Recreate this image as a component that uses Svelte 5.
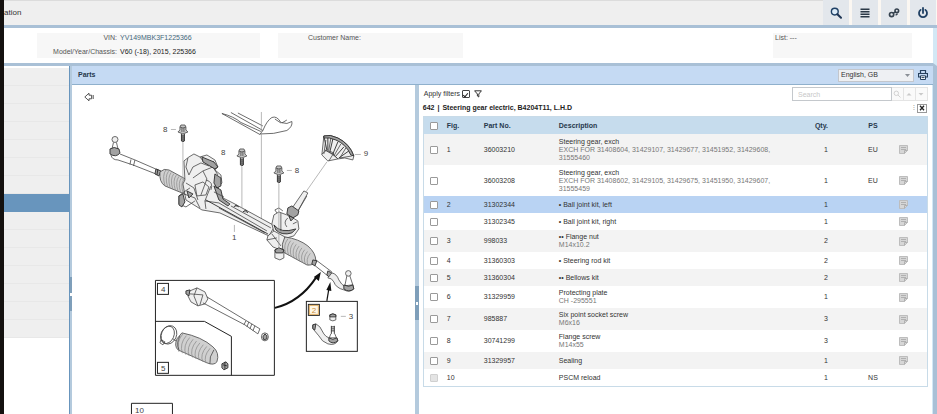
<script lang="ts">
  type Part = {
    fig: string;
    partNo: string;
    name: string;
    detail?: string;
    qty: number;
    ps?: string;
    disabled?: boolean;
    note?: boolean;
  };

  const parts: Part[] = [
    {
      fig: '1',
      partNo: '36003210',
      name: 'Steering gear, exch',
      detail: 'EXCH FOR 31408604, 31429107, 31429677, 31451952, 31429608, 31555460',
      qty: 1,
      ps: 'EU',
    },
    {
      fig: '',
      partNo: '36003208',
      name: 'Steering gear, exch',
      detail: 'EXCH FOR 31408602, 31429105, 31429675, 31451950, 31429607, 31555459',
      qty: 1,
      ps: 'EU',
    },
    { fig: '2', partNo: '31302344', name: '• Ball joint kit, left', qty: 1 },
    { fig: '', partNo: '31302345', name: '• Ball joint kit, right', qty: 1 },
    { fig: '3', partNo: '998033', name: '•• Flange nut', detail: 'M14x10.2', qty: 2 },
    { fig: '4', partNo: '31360303', name: '• Steering rod kit', qty: 2 },
    { fig: '5', partNo: '31360304', name: '•• Bellows kit', qty: 2 },
    { fig: '6', partNo: '31329959', name: 'Protecting plate', detail: 'CH -295551', qty: 1 },
    { fig: '7', partNo: '985887', name: 'Six point socket screw', detail: 'M6x16', qty: 3 },
    { fig: '8', partNo: '30741299', name: 'Flange screw', detail: 'M14x55', qty: 3 },
    { fig: '9', partNo: '31329957', name: 'Sealing', qty: 1 },
    { fig: '10', partNo: '', name: 'PSCM reload', qty: 1, ps: 'NS', disabled: true, note: false },
  ];

  const sections = Array.from({ length: 15 }, (_, i) => i);

  // ribs across the three rubber bellows
  const ribs = [0, 1, 2, 3, 4, 5, 6, 7, 8];
  const bolts = [
    { x: 183, y: 129, end: 180 },
    { x: 242, y: 153, end: 208 },
    { x: 279, y: 170, end: 251 },
  ];

  let selectedPart = $state('31302344');
  let activeSection = $state(7);
  let filtersOn = $state(true);
  let query = $state('');
  let language = $state('English, GB');
</script>

<div class="app">
  <header class="topbar">
    <span class="topbar__title">ation</span>
    <nav class="topbar__actions" aria-label="Main">
      <button type="button" aria-label="Search">
        <svg viewBox="0 0 12 12" width="12" height="12">
          <circle cx="4.8" cy="4.6" r="3.4" fill="#dcebf8" stroke="#1f4166" stroke-width="1.4" />
          <path d="M7.4 7.2 11 10.8" stroke="#1f3554" stroke-width="2" stroke-linecap="round" />
        </svg>
      </button>
      <button type="button" aria-label="List">
        <svg viewBox="0 0 12 12" width="12" height="12">
          <path d="M1.500 2.200h9M1.500 4.700h9M1.500 7.200h9M1.500 9.700h9" stroke="#2b3947" stroke-width="1.600" />
        </svg>
      </button>
      <button type="button" aria-label="Links">
        <svg viewBox="0 0 12 12" width="12" height="12" fill="none" stroke="#35424f">
          <circle cx="3.6" cy="7.6" r="2.1" stroke-width="1.7" />
          <circle cx="8.8" cy="3.8" r="1.8" stroke-width="1.6" />
          <path d="M5 6.400 7.400 4.800M7.600 8.200l2-1.400" stroke-width="1.400" />
        </svg>
      </button>
      <button type="button" aria-label="Log out">
        <svg viewBox="0 0 12 12" width="12" height="12" fill="none" stroke="#1f3f63" stroke-width="1.8">
          <path d="M3.600 2.900a4 4 0 1 0 4.800 0M6 1v5" stroke-linecap="round" />
        </svg>
      </button>
    </nav>
  </header>

  <section class="vehicle">
    <dl class="vehicle__box vehicle__box--car">
      <dt>VIN:</dt>
      <dd class="vin">YV149MBK3F1225366</dd>
      <dt>Model/Year/Chassis:</dt>
      <dd>V60 (-18), 2015, 225366</dd>
    </dl>
    <div class="vehicle__box vehicle__box--customer">Customer Name:</div>
    <div class="vehicle__box vehicle__box--list">List: ---</div>
  </section>

  <div class="workspace">
    <nav class="sections" aria-label="Sections">
      {#each sections as i (i)}
        <button
          type="button"
          class:is-active={activeSection === i}
          aria-label={`Section ${i + 1}`}
          onclick={() => (activeSection = i)}
        ></button>
      {/each}
    </nav>
    <div class="splitter splitter--left"><span></span></div>

    <main class="parts">
      <div class="parts__header">
        <h1>Parts</h1>
        <div class="language">
          <select aria-label="Language" bind:value={language}>
            <option>English, GB</option>
          </select>
          <svg viewBox="0 0 5 3" width="5" height="3"><path d="M0 0h5L2.500 3z" fill="#8a8f96" /></svg>
        </div>
        <button type="button" class="print" aria-label="Print">
          <svg viewBox="0 0 10 10" width="10" height="10" fill="none" stroke="#26405c">
            <path d="M2.500 3.500v-3h5v3M2.500 7h-2V3.500h9V7h-2" stroke-width="1.200" />
            <path d="M2.500 5.800h5v3.700h-5z" fill="#fff" />
            <path d="M3.500 7.600h3" />
          </svg>
        </button>
      </div>

      <div class="parts__body">
        <section class="drawing">
          <div class="drawing__bar">
            <button type="button" aria-label="Back">
              <svg viewBox="0 0 10 10" width="10" height="10">
                <path d="M.8 5 5 1.200v2h2.600v3.600H5v2zM9.200 3v4" fill="#fff" stroke="#444" stroke-width=".9" />
              </svg>
            </button>
          </div>

          <svg class="drawing__art" viewBox="72 106 343 308" role="img" aria-label="Steering gear">
            <!-- protecting plate -->
            <g class="line">
              <path d="M222 113.500 260 134.500 263 130.500 231 112.500M238 113l25 13" />
              <path d="M222 113.500q12 3 19 9l20 9M263 130.500q4-10 9-13 5-2 9 5l6 1 5-2q1 5-5 9-13 4-27 3.500" />
              <path d="M275 119l6 4M282 123l5-3" />
            </g>
            <path class="leader" d="M261.500 112v107M327 162l-21 30" />

            <!-- left tie rod -->
            <g class="line">
              <circle cx="115" cy="139.500" r="3" />
              <path d="M113.500 142.500 112 149M116.500 142.500 118 149" />
              <path class="dark" d="M110 149q4-3 9 0l1 4q-4 5-10 1z" />
              <path d="M111 155q1 5 7 5l15 5M120 154l15 6 23 10M133 165l23 9M131 159.500l-1 5M135 160l-1.500 6" />
              <path class="dark" d="M156 169l5 2-2 5-4-2zM158 169l-1 6" />
            </g>

            <!-- left bellows -->
            <g class="line">
              <path class="rubber" d="M160 172q4-4 9-2l22 12-4 13-22-9q-6-4-5-14z" />
              {#each ribs as i (i)}
                <path class="rib" d={`M${166 + i * 2.6} ${170 + i * 1.3}q-4 5-1 ${16 - i * 0.3}`} />
              {/each}
            </g>

            <!-- motor and housing -->
            <g class="line">
              <path
                class="metal"
                d="M185 180 184 161l5-4 5-3 6 3 7-2 8 5 3 7-3 3 6 5 1 8-4 5 5 10 10 5 42 23-6 10-49-23-18-3-16-10-3-16z"
              />
              <path d="M188 158l-2 9 3 8 4-8 8-4 8 3 5-5M193 178l10-7 10-4 5 8M200 157l4 5 12 4M203 171l4 8-6 16" />
              <path class="dark" d="M202 157l12 5 4 5-3 2-12-7zM215 174l6 4v8l-4 2-3-5zM214 186l7 4 2 9 7 5-2 2-9-6z" />
              <path d="M190 188l-6 4-5 4v8l7 3 9-6M184 194l11 4 5 10M186 183l8 5 4 12M195 185l8-3 6 5-3 8-9 1zM206 180q8 2 5 10" />
              <path class="dark" d="M179 196l4-2 2 8-3 5-3-2zM187 191l6 3-4 4z" />
              <path d="M211 186l-6 15 1 8M205 201l14 2 48 28M224 197l-10-5M219 208l46 25M231 206l40 22" />
              <path class="dark" d="M206 200 268 234M234 207l2-2 3 2M243 212l3-2 2 3" />
            </g>

            <!-- pinion with input shaft -->
            <g class="line">
              <path class="metal" d="M304 191l4 2-11 20-6-3z" />
              <path d="M307 196l-10 17" />
              <path class="dark" d="M288 208l4-2 7 5-1 4-5 3-6-4z" />
              <path class="metal" d="M274 215l5-3 8 3 6 3 5 3 1 8-5 7-7 2-8-2-5-4-2-8z" />
              <path class="dark" d="M274 225q7 9 22 4l-4 4q-10 3-16-3zM289 216l5 2-3 3z" />
              <path d="M281 213v18M288 218q-5 4-1 9M277 213l-2-3 4-2 4 3M293 224l4-2" />
              <path class="metal" d="M268 236l6-5 11 6-2 14-10-4-6-7z" />
              <path d="M272 234l9 12M267 240l10-2" />
            </g>

            <!-- right bellows and tie rod -->
            <g class="line">
              <path class="rubber" d="M285 237q14 2 23 9 8 7 8 15-2 5-9 4l-24-13q-2-8 2-15z" />
              {#each ribs as i (i)}
                <path class="rib" d={`M${288 + i * 2.8} ${239 + i * 1.8}q-5 6-2 ${15 - i * 0.3}`} />
              {/each}
              <path class="metal" d="M275 250l4-2 5 2v8l-4 2-5-2z" />
              <path class="dark" d="M275 250l4-2 5 2-1 3h-7z" />
              <path d="M316 260l16 12M313 264l15 12" />
              <path class="dark" d="M313 260l4 1-2 5-3-2zM328 271l4 2-2 5-3-3z" />
              <path class="metal" d="M332 273q5 1 7 7 3 5 5 6l9-1 1 4q-4 4-10 1-8-2-10-8-2-4-6-4z" />
              <circle cx="348.500" cy="273.500" r="2.800" />
              <path d="M347 276l-2 10M350 276l3 9" />
              <path class="dark" d="M344 285q5 3 9 0l1 4q-5 4-10 0z" />
            </g>

            <!-- flange screws -->
            {#each bolts as bolt (bolt.x)}
              <path class="leader" d={`M${bolt.x} ${bolt.y + 14}V${bolt.end}`} />
              <g class="line" transform={`translate(${bolt.x} ${bolt.y})`}>
                <path class="metal head" d="M-3-2-2-4h4l1 2v3l2 2-5 2-5-2 2-2z" />
                <path d="M-3-2 0-1l3-1M-1-1v4M1-1v4" />
                <path class="dark" d="M-1.500 5v7l1.500 1 1.500-1V5M-1.500 7h3M-1.500 9h3M-1.500 11h3" />
              </g>
            {/each}

            <!-- sealing -->
            <g class="line">
              <path class="metal" d="M324 136q6-2 14 2 12 6 16 18l-1 4-8-2-7 1-10 2-6-6z" />
              <path class="dark" d="M324 136l3 14M328 138v12M333 139l-3 13M338 142l-5 12M344 147l-8 9M349 151l-10 7M325 150l8 4 5 5" />
              <path d="M326 140l-2 14M331 138l-2 12M341 144l-7 12M352 156l-12 2M322 154l5-4 7 3-5 8M346 148l-6 10" />
              <path class="dark" d="M324 136q6-2 14 2 12 6 16 18l-3-1q-5-11-15-15-7-3-12-2z" />
            </g>

            <!-- steering rod kit -->
            <path class="frame" d="M155.500 280.500h119v95h-119zM155.500 321.500h49l27 15v39" />
            <rect class="tag" x="157.500" y="283.500" width="11" height="11" />
            <rect class="tag" x="157.500" y="362.500" width="11" height="11" />
            <g class="line">
              <path class="metal" d="M190 291l7-3 8 4 3 7-3 5-7 2-7-4-3-6z" />
              <path class="dark" d="M186 291l4-1-1 6-3-2z" />
              <path d="M190 294l13 1M197 288l-3 8 4 10M203 295l-3 10M203 303l42 22 13 9M207 297l53 32-2 5" />
              <path d="M246 321l-2 4M249 322l-2 5M252 324l-2 5M255 326l-2 5" />
              <ellipse class="metal" cx="265" cy="337" rx="3.500" ry="4" />
              <path class="dark" d="M263 337l2-3 2 2v3l-3 1z" />
            </g>

            <!-- bellows kit -->
            <g class="line">
              <ellipse cx="169" cy="335" rx="7.500" ry="9.500" transform="rotate(24 169 335)" />
              <ellipse cx="167.500" cy="335" rx="6.500" ry="9" transform="rotate(24 167.500 335)" />
              <path d="M161 340l4 2-2 3-3-2zM173 339l3 2" />
              <path class="rubber" d="M177 339l5-6q20 4 31 14 7 6 4 15-3 4-10 1l-29-13q-4-4-1-11z" />
              {#each ribs as i (i)}
                <path class="rib" d={`M${183 + i * 3.4} ${334 + i * 1.8}q-7 8-4 ${18 - i * 0.4}`} />
              {/each}
              <path d="M180 336q-4 7-1 14M214 350q-5 7-4 14" />
              <path class="dark" d="M222 364l4-2 2 2v4l-4 2-2-2zM223 365l4 1M225 362v7" />
            </g>

            <!-- ball joint kit -->
            <rect class="frame" x="306.500" y="301.500" width="51" height="50" />
            <rect class="tag" x="308.500" y="304.500" width="11" height="11" />
            <rect class="tag tag--active" x="309.500" y="305.500" width="9" height="9" />
            <g class="line">
              <path class="metal" d="M330 315l3-1 3 1v5l-3 1-3-1z" />
              <path class="dark" d="M330 315l3-1 3 1v2h-6z" />
              <path class="dark" d="M331.500 327h3M331.500 329h3M331.500 331h3M331.500 326v8M334.500 326v8" />
              <path d="M331 334l-2 5M335 334l2 5" />
              <path class="metal" d="M313 325q4-2 7 2l4 7q2 3 5 4h8l1 3q-3 5-10 3-6-2-9-8l-5-6q-2-2-1-5z" />
              <path class="dark" d="M329 338q4 3 8 0l1 3q-5 4-9 0zM313 325l3-1-1 6-2-1z" />
            </g>

            <path class="arrow" d="M275 308q25-6 41-30" />
            <path class="arrow arrow--thin" d="M327 301l2-12" />
            <path class="tip" d="M321 272l-2 9-5-4zM330.500 282l1 9-5-1z" />

            <path class="tag" d="M131.500 416v-12.500h41V416" />

            <g class="callouts">
              <text x="163" y="132">8</text>
              <text x="221" y="155">8</text>
              <text x="295" y="173">8</text>
              <text x="364" y="156">9</text>
              <text x="232" y="240">1</text>
              <text x="349" y="319">3</text>
              <text x="161" y="292">4</text>
              <text x="161" y="371">5</text>
              <text class="active" x="312" y="313">2</text>
              <text x="135" y="413">10</text>
            </g>
            <path class="leader" d="M171 129.500h5M287 170.500h5M355 154.500h6M234.500 225v7M341 316.500h5" />
          </svg>
        </section>

        <div class="splitter splitter--middle"><span></span></div>

        <section class="list">
          <div class="list__tools">
            <label class="filter">
              Apply filters
              <input type="checkbox" bind:checked={filtersOn} />
            </label>
            <svg viewBox="0 0 8 8" width="8" height="8">
              <path d="M.6.8h6.800L4.800 4v3L3.400 6V4z" fill="#fff" stroke="#333" />
            </svg>
            <div class="search">
              <input type="text" aria-label="Search" placeholder="Search" bind:value={query} />
              <button type="button" aria-label="Find">
                <svg viewBox="0 0 8 8" width="8" height="8" fill="none" stroke="#d2d2d2">
                  <circle cx="3.300" cy="3.300" r="2.200" />
                  <path d="M5 5l2.500 2.500" />
                </svg>
              </button>
              <button type="button" aria-label="Previous hit">
                <svg viewBox="0 0 8 8" width="8" height="8"><path d="M1.500 5.500 4 3l2.500 2.500z" fill="#c9c9c9" /></svg>
              </button>
              <button type="button" aria-label="Next hit">
                <svg viewBox="0 0 8 8" width="8" height="8"><path d="M1.500 3 4 5.500 6.500 3z" fill="#c9c9c9" /></svg>
              </button>
            </div>
          </div>

          <div class="list__title">
            <h2>
              <span>642</span>
              <span>|</span>
              <span>Steering gear electric, B4204T11, L.H.D</span>
            </h2>
            <span class="dots">⁝</span>
            <button type="button" class="close" aria-label="Close all">
              <svg viewBox="0 0 6 6" width="6" height="6" stroke="#222" stroke-width="1.300">
                <path d="M1 .8 5 5.200M5 .8 1 5.200" />
              </svg>
            </button>
          </div>

          <table>
            <colgroup>
              <col class="c-check" />
              <col class="c-fig" />
              <col class="c-no" />
              <col />
              <col class="c-qty" />
              <col class="c-ps" />
              <col class="c-note" />
            </colgroup>
            <thead>
              <tr>
                <th class="check"><input type="checkbox" aria-label="Select all" /></th>
                <th>Fig.</th>
                <th>Part No.</th>
                <th>Description</th>
                <th class="qty">Qty.</th>
                <th class="ps">PS</th>
                <th></th>
              </tr>
            </thead>
            <tbody>
              {#each parts as part (part.fig + part.partNo)}
                <tr
                  class:is-selected={selectedPart === part.partNo}
                  class:is-exchange={part.detail?.startsWith('EXCH')}
                  onclick={() => (selectedPart = part.partNo)}
                >
                  <td class="check">
                    <input type="checkbox" disabled={part.disabled} aria-label={`Select ${part.name}`} />
                  </td>
                  <td>{part.fig}</td>
                  <td>{part.partNo}</td>
                  <td class="desc">
                    {part.name}
                    {#if part.detail}
                      <small>{part.detail}</small>
                    {/if}
                  </td>
                  <td class="qty">{part.qty}</td>
                  <td class="ps">{part.ps ?? ''}</td>
                  <td class="note">
                    {#if part.note !== false}
                      <svg viewBox="0 0 9 9" width="9" height="9">
                        <path d="M.5.5h8v5l-3 3h-5z" fill="#d6d6d6" stroke="#bdbdbd" />
                        <path d="M2 2.500h5M2 4.500h5M8.500 5.500h-3v3" fill="none" stroke="#b0b0b0" />
                      </svg>
                    {/if}
                  </td>
                </tr>
              {/each}
            </tbody>
          </table>
        </section>
      </div>
    </main>
  </div>
</div>

<style>
  :global(body) {
    margin: 0;
    background: #fff;
  }

  .app {
    --edge: #a9c0d6;
    --edge-soft: #d3e8f5;
    box-sizing: border-box;
    display: flex;
    flex-direction: column;
    height: 100vh;
    overflow: hidden;
    border-left: 4px solid #14110f;
    font-family: 'Liberation Sans', Arial, sans-serif;
    font-size: 7px;
    line-height: 8px;
    color: #333;
  }

  button,
  input,
  select {
    box-sizing: border-box;
    margin: 0;
    padding: 0;
    font: inherit;
    color: inherit;
  }

  button {
    display: inline-flex;
    align-items: center;
    justify-content: center;
    border: 0;
    background: none;
    cursor: pointer;
  }

  input[type='checkbox'] {
    appearance: none;
    display: inline-grid;
    place-content: center;
    width: 8px;
    height: 8px;
    border: 1px solid #9a9a9a;
    border-radius: 1px;
    background: #fff;
  }

  input[type='checkbox']:checked {
    border-color: #444;
  }

  input[type='checkbox']:checked::before {
    content: '';
    width: 2px;
    height: 4px;
    border: solid #222;
    border-width: 0 1px 1px 0;
    transform: rotate(40deg);
  }

  input[type='checkbox']:disabled {
    border-color: #d0d0d0;
    background: #e4e4e4;
  }

  h1,
  h2 {
    margin: 0;
    font-size: 7px;
    line-height: 8px;
  }

  .topbar {
    display: flex;
    flex: none;
    align-items: center;
    justify-content: space-between;
    height: 25px;
    border-bottom: 3px solid var(--edge);
    background: #efefef;
    box-shadow: inset 0 1px 0 #dcdcdc;
  }

  .topbar__title {
    font-size: 8px;
    line-height: 12px;
  }

  .topbar__actions {
    display: flex;
    gap: 3px;
    height: 100%;
    background: #fbf7f2;
    padding-right: 1px;
  }

  .topbar__actions button {
    width: 26px;
    background: #e3e7ec;
  }

  .vehicle {
    display: flex;
    flex: none;
    gap: 18px;
    padding: 5px 21px 5px 33px;
    border-right: 4px solid var(--edge-soft);
    border-bottom: 3px solid var(--edge);
  }

  .vehicle__box {
    box-sizing: border-box;
    min-height: 25px;
    margin: 0;
    background: #f7f7f7;
    color: #555;
  }

  .vehicle__box--car {
    display: grid;
    grid-template-columns: 80px 1fr;
    gap: 4px 3px;
    flex: 0 1 223px;
    padding-top: 1px;
  }

  .vehicle__box--car dt {
    text-align: right;
  }

  .vehicle__box--car dd {
    margin: 0;
    color: #222;
  }

  .vehicle__box--car .vin {
    color: #45687c;
  }

  .vehicle__box--customer {
    flex: 0 1 185px;
    padding: 1px 30px;
  }

  .vehicle__box--list {
    flex: 0 1 139px;
    margin-left: auto;
    padding: 1px 2px;
  }

  .workspace {
    display: flex;
    flex: 1;
    min-height: 0;
    border-right: 4px solid var(--edge);
  }

  .sections {
    display: flex;
    flex: none;
    flex-direction: column;
    width: 65px;
    padding-top: 2px;
  }

  .sections button {
    height: 18px;
    border-bottom: 1px solid #e8e8e8;
    background: #efefef;
  }

  .sections .is-active {
    border-color: #6895bd;
    background: #6895bd;
  }

  .splitter {
    display: flex;
    flex: none;
    align-items: start;
    box-sizing: border-box;
    background: #b4cadd;
  }

  .splitter span {
    display: grid;
    place-items: center;
    width: 100%;
    height: 34px;
    background: #7f9fba;
  }

  .splitter span::before {
    content: '';
    width: 2px;
    height: 3px;
    background: #fff;
  }

  .splitter--left {
    width: 3px;
    padding-top: 211px;
    border-left: 1px solid #6895bd;
  }

  .splitter--middle {
    width: 4px;
    padding-top: 201px;
  }

  .parts {
    display: flex;
    flex: 1;
    flex-direction: column;
    min-width: 0;
  }

  .parts__header {
    display: flex;
    flex: none;
    align-items: center;
    height: 18px;
    padding: 0 5px 0 6px;
    border-bottom: 1px solid #8fb0cc;
    background: #c5daf3;
  }

  .parts__header h1 {
    margin-right: auto;
    color: #26384c;
  }

  .language {
    display: grid;
    align-items: center;
  }

  .language select,
  .language svg {
    grid-area: 1 / 1;
  }

  .language select {
    appearance: none;
    width: 76px;
    height: 13px;
    padding: 0 2px;
    border: 1px solid #c3c6cc;
    border-radius: 0;
    background: #eef0f3;
  }

  .language svg {
    justify-self: end;
    margin-right: 4px;
    pointer-events: none;
  }

  .print {
    width: 10px;
    height: 10px;
    margin-left: 4px;
  }

  .parts__body {
    display: grid;
    flex: 1;
    grid-template-columns: minmax(0, 2fr) 4px minmax(0, 3fr);
    min-height: 0;
  }

  .drawing {
    min-width: 0;
    overflow: hidden;
  }

  .drawing__bar {
    display: flex;
    align-items: center;
    height: 21px;
    padding: 2px 12px 0;
    box-sizing: border-box;
  }

  .drawing__art {
    display: block;
    width: 100%;
  }

  .line {
    fill: none;
    stroke: #484848;
    stroke-width: 0.8;
    stroke-linejoin: round;
  }

  .line circle,
  .metal {
    fill: #efefef;
  }

  .head {
    fill: #c4c4c4;
  }

  .rubber {
    fill: #d0d0d0;
  }

  .dark {
    fill: #a2a2a2;
    stroke: #2c2c2c;
    stroke-width: 0.9;
  }

  .rib {
    stroke: #888;
    stroke-width: 0.7;
  }

  .leader {
    fill: none;
    stroke: #999;
    stroke-width: 0.7;
  }

  .frame,
  .tag {
    fill: none;
    stroke: #222;
  }

  .tag--active {
    fill: #fff7e6;
    stroke: #e0ad62;
  }

  .arrow {
    fill: none;
    stroke: #111;
    stroke-width: 2;
  }

  .arrow--thin {
    stroke-width: 1.2;
  }

  .tip {
    fill: #111;
  }

  .callouts {
    font-size: 8px;
    fill: #444;
  }

  .callouts .active {
    fill: #c98d3c;
  }

  .list {
    display: flex;
    flex-direction: column;
    min-width: 0;
    padding: 2px 4px 0;
    border-right: 1px solid var(--edge-soft);
  }

  .list__tools {
    display: flex;
    align-items: center;
    gap: 4px;
    height: 14px;
  }

  .filter {
    display: flex;
    align-items: center;
    gap: 2px;
    padding-left: 1px;
  }

  .search {
    display: flex;
    margin-left: auto;
  }

  .search input {
    width: 100px;
    height: 14px;
    padding: 0 5px;
    border: 1px solid #c4c8cc;
  }

  .search input::placeholder {
    color: #c8c8c8;
  }

  .search button {
    width: 12px;
    height: 14px;
    border: 1px solid #e4e4e4;
    border-left: 0;
    background: #fafafa;
  }

  .list__title {
    display: flex;
    align-items: center;
    height: 15px;
    padding-bottom: 1px;
    box-sizing: border-box;
  }

  .list__title h2 {
    display: flex;
    gap: 3px;
    margin-right: auto;
    color: #222;
  }

  .dots {
    margin-right: 2px;
    color: #888;
  }

  .close {
    width: 10px;
    height: 9px;
    margin-right: 1px;
    border: 1px solid #999;
  }

  table {
    width: 100%;
    table-layout: fixed;
    border-collapse: separate;
    border-spacing: 0;
    border: 1px solid #c8dbe8;
  }

  .c-check {
    width: 20px;
  }

  .c-fig {
    width: 37px;
  }

  .c-no {
    width: 75px;
  }

  .c-qty {
    width: 66px;
  }

  .c-ps {
    width: 50px;
  }

  .c-note {
    width: 29px;
  }

  th,
  td {
    height: 17px;
    box-sizing: border-box;
    padding: 3px;
    text-align: left;
    vertical-align: middle;
  }

  th {
    background: #c6dced;
    color: #26384c;
  }

  tbody tr:nth-child(odd) {
    background: #f3f3f3;
  }

  tbody tr.is-selected {
    background: #b9d3f3;
  }

  .is-exchange td {
    height: 31px;
  }

  .check {
    padding: 0 0 0 6px;
    line-height: 0;
  }

  small {
    display: block;
    font-size: 7px;
    color: #777;
  }

  .qty {
    padding-right: 20px;
    text-align: right;
  }

  .ps {
    text-align: center;
  }

  .note {
    padding: 0 1px;
    line-height: 0;
  }
</style>
